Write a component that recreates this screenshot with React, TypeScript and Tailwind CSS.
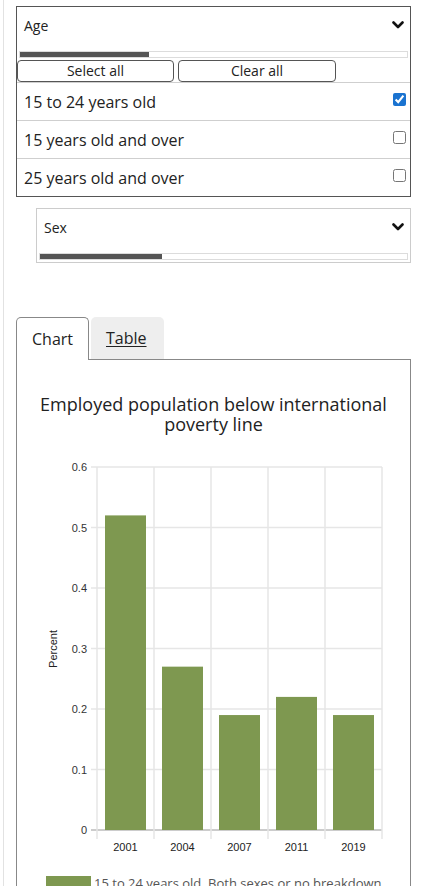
import React from "react";

const Chevron = () => (
  <svg width="12" height="8" viewBox="0 0 12 8" className="block">
    <polyline points="1.5,1.5 6,6 10.5,1.5" fill="none" stroke="#111" strokeWidth="2.6" strokeLinecap="round" strokeLinejoin="round" />
  </svg>
);

const rows = [
  { label: "15 to 24 years old", checked: true },
  { label: "15 years old and over", checked: false },
  { label: "25 years old and over", checked: false },
];

const bars = [
  { year: "2001", v: 0.52 },
  { year: "2004", v: 0.27 },
  { year: "2007", v: 0.19 },
  { year: "2011", v: 0.22 },
  { year: "2019", v: 0.19 },
];

function Chart() {
  const top = 11;
  const bottom = 374;
  const left = 80;
  const colW = 57;
  const scale = (bottom - top) / 0.6;
  const ticks = [0, 0.1, 0.2, 0.3, 0.4, 0.5, 0.6];
  return (
    <svg width="392" height="415" className="block" style={{ fontFamily: "'Liberation Sans', Arial, sans-serif" }}>
      {ticks.map((t) => {
        const y = bottom - t * scale;
        return (
          <g key={t}>
            <line x1={left - 6} x2={left + colW * 5} y1={y} y2={y} stroke={t === 0 ? "#cccccc" : "#e6e6e6"} strokeWidth={t === 0 ? 2 : 1.5} />
            <text x={left - 10} y={y + 4} textAnchor="end" fontSize="11" fill="#333">
              {t === 0 ? "0" : t.toFixed(1)}
            </text>
          </g>
        );
      })}
      {[0, 1, 2, 3, 4, 5].map((i) => (
        <line key={i} x1={left + colW * i} x2={left + colW * i} y1={top} y2={bottom + 9} stroke="#e6e6e6" strokeWidth="1.5" />
      ))}
      {bars.map((b, i) => {
        const h = b.v * scale;
        return (
          <g key={b.year}>
            <rect x={left + colW * i + 8} y={bottom - h} width={41} height={h} fill="#7e9850" />
            <text x={left + colW * i + 28.5} y={395} textAnchor="middle" fontSize="11" fill="#222">
              {b.year}
            </text>
          </g>
        );
      })}
      <text x={0} y={0} fontSize="11" fill="#222" textAnchor="middle" transform="translate(40 193) rotate(-90)">
        Percent
      </text>
    </svg>
  );
}

export default function App() {
  return (
    <div className="min-h-[886px] bg-white font-['Open_Sans',sans-serif] text-[#222]">
      <div className="ml-[3px] border-l border-[#e2e2e2] min-h-[886px] pl-[12px] pr-[15px] pt-[6px] overflow-hidden h-[886px]">
        {/* Age dropdown */}
        <div className="border border-[#555]">
          <div className="flex items-center justify-between h-[36px] pl-[7px] pr-[6px]">
            <span className="text-[14px]">Age</span>
            <Chevron />
          </div>
          <div className="mx-[2px] mt-[8px] h-[7px] border border-[#dcdcdc]">
            <div className="h-[5px] w-[129px] bg-[#555]" />
          </div>
          <div className="flex gap-[4px] mt-[2px]">
            <button className="w-[157px] h-[22px] border border-[#555] rounded-[4px] text-[14px] leading-none bg-white">Select all</button>
            <button className="w-[158px] h-[22px] border border-[#555] rounded-[4px] text-[14px] leading-none bg-white">Clear all</button>
          </div>
          {rows.map((r) => (
            <div key={r.label} className="flex items-center justify-between h-[38px] border-t border-[#cfcfcf] pl-[7px] pr-[4px]">
              <span className="text-[16px]">{r.label}</span>
              <input type="checkbox" checked={r.checked} readOnly className="w-[13px] h-[13px] m-0 mb-[5px] accent-[#1a73d0]" />
            </div>
          ))}
        </div>

        {/* Sex dropdown */}
        <div className="ml-[20px] mt-[11px] border border-[#cccccc] h-[55px]">
          <div className="flex items-center justify-between h-[36px] pl-[7px] pr-[6px]">
            <span className="text-[14px]">Sex</span>
            <Chevron />
          </div>
          <div className="mx-[2px] mt-[8px] h-[7px] border border-[#dcdcdc]">
            <div className="h-[5px] w-[122px] bg-[#555]" />
          </div>
        </div>

        {/* Tabs */}
        <div className="mt-[54px] flex items-end gap-[2px] relative z-10">
          <div className="w-[73px] h-[43px] border border-b-0 border-[#888] rounded-t-[5px] bg-white flex items-center pl-[15px] text-[16px] -mb-px">
            Chart
          </div>
          <div className="w-[73px] h-[42px] rounded-t-[5px] bg-[#eeeeee] flex items-center pl-[15px] text-[16px] underline underline-offset-2">
            Table
          </div>
        </div>
        <div className="border border-[#888] border-b-0 h-[600px]">
          <div className="pt-[34px] text-center text-[18px] leading-[20px] text-[#222] px-[20px]">
            Employed population below international poverty line
          </div>
          <div className="mt-[22px]">
            <Chart />
          </div>
          <div className="flex items-start mt-[5px] pl-[29px]">
            <div className="w-[45px] h-[14px] bg-[#7e9850]" />
            <span className="ml-[3px] text-[13px] leading-[14px] text-[#555]">15 to 24 years old, Both sexes or no breakdown</span>
          </div>
        </div>
      </div>
    </div>
  );
}
